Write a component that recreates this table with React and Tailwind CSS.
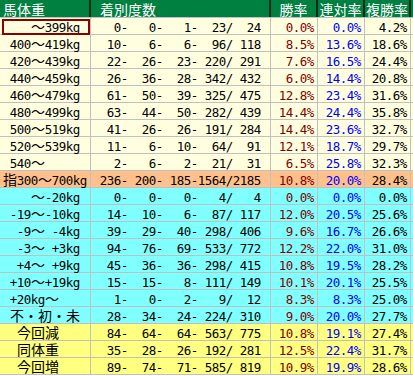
import React from 'react';

/* ---- fixed-pitch text: half-width 7px, full-width 14px ---- */
function Mono({ text }) {
  return (
    <span className="flex h-full items-start pt-[3px]">
      {Array.from(text).map((ch, i) => {
        const wide = ch.charCodeAt(0) > 0xff;
        return wide ? (
          <span key={i} className="flex w-[14px] h-[11px] leading-[11px] justify-center text-[14px] font-['Noto_Sans_CJK_JP',sans-serif]">{ch}</span>
        ) : (
          <span key={i} className="flex w-[7px] h-[13px] leading-[13px] justify-center">{ch === ' ' ? '\u00a0' : ch}</span>
        );
      })}
    </span>
  );
}

const pad = (v, n) => String(v).padStart(n, ' ');
const pct = (v) => pad(v.toFixed(1), 4) + '%';
const record = (r) => `${pad(r[1], 4)}-${pad(r[2], 4)}-${pad(r[3], 4)}-${pad(r[4], 4)}/${pad(r[5], 4)}`;

const CREAM = 'bg-[#ffffe0]';
const ORANGE = 'bg-[#ffc08c]';
const CYAN = 'bg-[#80ffff]';
const YELLOW = 'bg-[#ffff80]';

const rows = [
  ['    〜399kg', 0, 0, 1, 23, 24, 0.0, 0.0, 4.2, CREAM],
  [' 400〜419kg', 10, 6, 6, 96, 118, 8.5, 13.6, 18.6, CREAM],
  [' 420〜439kg', 22, 26, 23, 220, 291, 7.6, 16.5, 24.4, CREAM],
  [' 440〜459kg', 26, 36, 28, 342, 432, 6.0, 14.4, 20.8, CREAM],
  [' 460〜479kg', 61, 50, 39, 325, 475, 12.8, 23.4, 31.6, CREAM],
  [' 480〜499kg', 63, 44, 50, 282, 439, 14.4, 24.4, 35.8, CREAM],
  [' 500〜519kg', 41, 26, 26, 191, 284, 14.4, 23.6, 32.7, CREAM],
  [' 520〜539kg', 11, 6, 10, 64, 91, 12.1, 18.7, 29.7, CREAM],
  [' 540〜', 2, 6, 2, 21, 31, 6.5, 25.8, 32.3, CREAM],
  ['指300〜700kg', 236, 200, 185, 1564, 2185, 10.8, 20.0, 28.4, ORANGE],
  ['    〜-20kg', 0, 0, 0, 4, 4, 0.0, 0.0, 0.0, CYAN],
  [' -19〜-10kg', 14, 10, 6, 87, 117, 12.0, 20.5, 25.6, CYAN],
  ['  -9〜 -4kg', 39, 29, 40, 298, 406, 9.6, 16.7, 26.6, CYAN],
  ['  -3〜 +3kg', 94, 76, 69, 533, 772, 12.2, 22.0, 31.0, CYAN],
  ['  +4〜 +9kg', 45, 36, 36, 298, 415, 10.8, 19.5, 28.2, CYAN],
  [' +10〜+19kg', 15, 15, 8, 111, 149, 10.1, 20.1, 25.5, CYAN],
  [' +20kg〜', 1, 0, 2, 9, 12, 8.3, 8.3, 25.0, CYAN],
  [' 不・初・未', 28, 34, 24, 224, 310, 9.0, 20.0, 27.7, CYAN],
  ['  今回減', 84, 64, 64, 563, 775, 10.8, 19.1, 27.4, YELLOW],
  ['  同体重', 35, 28, 26, 192, 281, 12.5, 22.4, 31.7, YELLOW],
  ['  今回増', 89, 74, 71, 585, 819, 10.9, 19.9, 28.6, YELLOW],
];

const GRID = 'grid grid-cols-[91px_180px_47px_47px_46px]';
const cell = 'flex h-[16px] border-r border-[#c0c0c0] whitespace-nowrap';

function Row({ r, selected }) {
  return (
    <div className={`${GRID} h-[17px] border-b border-[#c0c0c0] ${r[9]}`}>
      <div className={`${cell} relative pl-[3px] text-black`}>
        <Mono text={r[0]} />
        {selected && <div className="absolute left-[2px] right-0 top-[1px] bottom-[-1px] border-2 border-[#8b0000]" />}
      </div>
      <div className={`${cell} justify-end pr-[9px] text-black`}><Mono text={record(r)} /></div>
      <div className={`${cell} justify-end pr-[3px] text-[#800000]`}><Mono text={pct(r[6])} /></div>
      <div className={`${cell} justify-end pr-[3px] text-[#0000ff]`}><Mono text={pct(r[7])} /></div>
      <div className={`${cell} justify-end pr-[3px] text-black`}><Mono text={pct(r[8])} /></div>
    </div>
  );
}

export default function App() {
  const head = 'h-[17px] border-r-2 border-[#00291a] leading-[19px] text-white text-[14px] whitespace-nowrap';
  return (
    <div className="w-[413px] h-[376px] bg-white overflow-hidden font-['DejaVu_Sans_Mono','Noto_Sans_CJK_JP',monospace] text-[12.5px]">
      {/* Header */}
      <div className={`${GRID} h-[18px] border-b border-[#c0c0c0] bg-[#008040] font-['Noto_Sans_CJK_JP',sans-serif]`}>
        <div className={`${head} pl-[3px]`}>馬体重</div>
        <div className={`${head} pl-[9px]`}>着別度数</div>
        <div className={`${head} text-center`}>勝率</div>
        <div className={`${head} text-center`}>連対率</div>
        <div className={`${head} text-center`}>複勝率</div>
      </div>

      {rows.map((r, i) => (
        <Row key={i} r={r} selected={i === 0} />
      ))}
    </div>
  );
}
